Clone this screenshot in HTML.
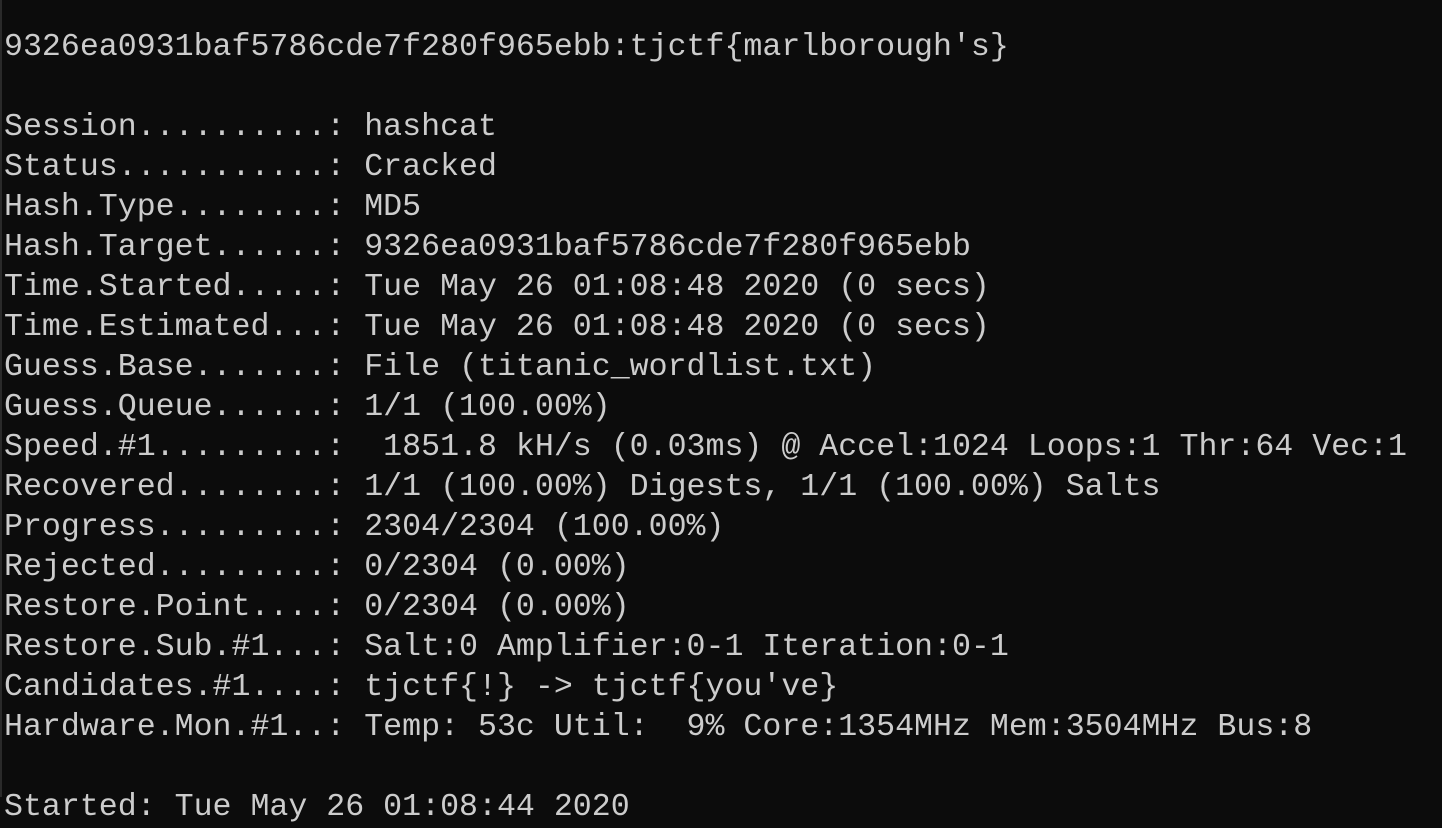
<!DOCTYPE html>
<html><head><style>
html,body{margin:0;padding:0;background:#0c0c0c;}
body{width:1442px;height:797px;overflow:hidden;position:relative;}
.l{position:absolute;left:0;top:0;width:2px;height:797px;background:#2a2a2a;}
pre{position:absolute;left:4px;top:28px;margin:0;font-family:"Liberation Mono",monospace;font-size:31.6px;line-height:40px;color:#cccccc;white-space:pre;}
</style></head><body><div class="l"></div><pre>9326ea0931baf5786cde7f280f965ebb:tjctf{marlborough's}

Session..........: hashcat
Status...........: Cracked
Hash.Type........: MD5
Hash.Target......: 9326ea0931baf5786cde7f280f965ebb
Time.Started.....: Tue May 26 01:08:48 2020 (0 secs)
Time.Estimated...: Tue May 26 01:08:48 2020 (0 secs)
Guess.Base.......: File (titanic_wordlist.txt)
Guess.Queue......: 1/1 (100.00%)
Speed.#1.........:  1851.8 kH/s (0.03ms) @ Accel:1024 Loops:1 Thr:64 Vec:1
Recovered........: 1/1 (100.00%) Digests, 1/1 (100.00%) Salts
Progress.........: 2304/2304 (100.00%)
Rejected.........: 0/2304 (0.00%)
Restore.Point....: 0/2304 (0.00%)
Restore.Sub.#1...: Salt:0 Amplifier:0-1 Iteration:0-1
Candidates.#1....: tjctf{!} -> tjctf{you've}
Hardware.Mon.#1..: Temp: 53c Util:  9% Core:1354MHz Mem:3504MHz Bus:8

Started: Tue May 26 01:08:44 2020</pre></body></html>
